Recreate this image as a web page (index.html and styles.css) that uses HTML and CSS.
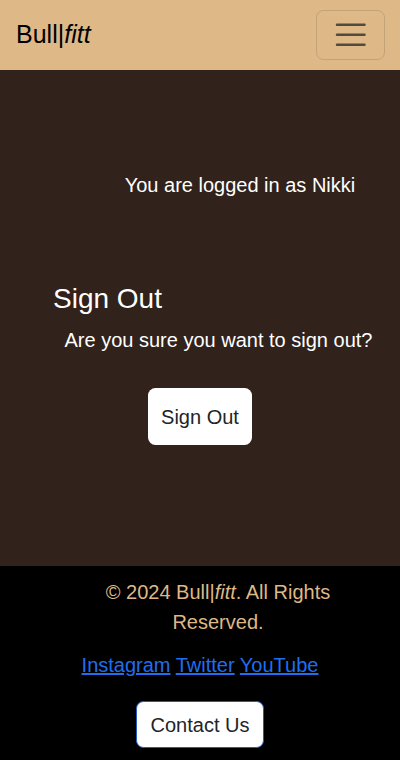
FILE: index.html
```html
<!DOCTYPE html>
<html lang="en">
<head>
<meta charset="utf-8">
<meta name="viewport" content="width=device-width, initial-scale=1">
<title>Sign Out - Bull|fitt</title>
<link rel="stylesheet" href="styles.css">
</head>
<body>
<nav class="navbar">
  <a class="brand" href="#">Bull|<em>fitt</em></a>
  <button class="toggler" type="button" aria-label="Toggle navigation">
    <svg class="toggler-icon" viewBox="0 0 30 30" width="37.5" height="37.5" aria-hidden="true">
      <path d="M4 7h22M4 15h22M4 23h22" stroke="rgba(33,37,41,0.75)" stroke-width="2" stroke-linecap="round" stroke-miterlimit="10" fill="none"/>
    </svg>
  </button>
</nav>
<main class="main">
  <p class="logged">You are logged in as Nikki</p>
  <h2 class="title">Sign Out</h2>
  <p class="confirm">Are you sure you want to sign out?</p>
  <div class="actions">
    <button class="btn btn-signout" type="button">Sign Out</button>
  </div>
</main>
<footer class="footer">
  <p class="copy">&copy; 2024 Bull|<em>fitt</em>. All Rights Reserved.</p>
  <p class="social">
    <a href="#">Instagram</a> <a href="#">Twitter</a> <a href="#">YouTube</a>
  </p>
  <div class="actions">
    <button class="btn btn-contact" type="button">Contact Us</button>
  </div>
</footer>
</body>
</html>
```
FILE: styles.css
```css
html {
  font-size: 20px;
}
* {
  box-sizing: border-box;
}
body {
  margin: 0;
  font-family: "Liberation Sans", Arial, sans-serif;
  font-size: 20px;
  line-height: 1.5;
  color: #212529;
  background: #000;
}
p, h2 {
  margin: 0;
}
.navbar {
  background: #deb887;
  height: 70px;
  display: flex;
  align-items: center;
  justify-content: space-between;
  padding: 0 15px 0 16px;
}
.brand {
  font-size: 25px;
  line-height: 1.5;
  color: #000;
  text-decoration: none;
}
.toggler {
  display: flex;
  align-items: center;
  justify-content: center;
  width: 69.5px;
  height: 49.5px;
  padding: 5px 15px;
  background: transparent;
  border: 1px solid rgba(33, 37, 41, 0.15);
  border-radius: 7.5px;
}
.toggler-icon {
  display: block;
  flex: none;
}
.main {
  background: #31221b;
  color: #fff;
  height: 496px;
  padding-top: 100px;
}
.logged {
  margin-left: 80px;
  text-align: center;
  line-height: 30px;
}
.title {
  margin-top: 81.5px;
  padding-left: 53px;
  font-size: 28px;
  font-weight: 400;
  line-height: 1.2;
}
.confirm {
  margin-top: 10px;
  margin-left: 37px;
  text-align: center;
  line-height: 30px;
}
.actions {
  display: flex;
  justify-content: center;
}
.btn {
  font-family: "Liberation Sans", Arial, sans-serif;
  font-size: 20px;
  line-height: 30px;
  color: #212529;
  background: #fff;
  border-radius: 7.5px;
}
.btn-signout {
  margin-top: 33px;
  padding: 13.5px 13.5px;
  border: 0;
}
.footer {
  background: #000;
  padding-top: 11px;
  padding-bottom: 12px;
}
.copy {
  width: 270px;
  margin-left: 83px;
  text-align: center;
  color: #deb887;
  line-height: 30px;
}
.social {
  margin-top: 13px;
  text-align: center;
  line-height: 30px;
}
.social a {
  color: #1f6ef0;
}
.btn-contact {
  margin-top: 21px;
  padding: 7.5px 14px;
  border: 1px solid #2459c8;
}
```
